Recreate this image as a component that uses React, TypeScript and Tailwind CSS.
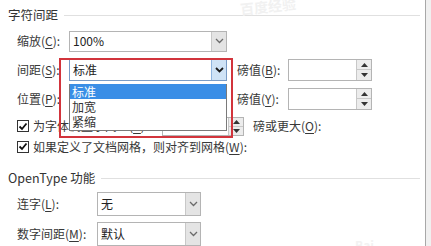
import React from 'react'

const font = { fontFamily: '"Noto Sans CJK SC", "Noto Sans", sans-serif' }

function Key({ k }: { k: string }) {
	return (
		<>
			(<span className="underline underline-offset-2">{k}</span>):
		</>
	)
}

function Chevron({ dark }: { dark?: boolean }) {
	return (
		<svg width="9" height="6" viewBox="0 0 9 6">
			<polyline points="1,1 4.5,4.5 8,1" fill="none" stroke={dark ? '#1a1a1a' : '#6b6b6b'} strokeWidth={dark ? 1.8 : 1.3} />
		</svg>
	)
}

function Combo({ value, w, h, open }: { value: string; w: string; h: string; open?: boolean }) {
	return (
		<div className={`${w} ${h} flex border ${open ? 'border-[#7a9cc6]' : 'border-[#b4b4b4]'} bg-white`}>
			<div className="flex-1 flex items-center pl-[3px] text-[12px] text-[#222]">{value}</div>
			<div
				className={`w-[15px] flex items-center justify-center border-l ${open ? 'bg-[#cfe3f6] border-[#8fb5e0]' : 'bg-[#e4e4e4] border-[#c8c8c8]'}`}
			>
				<Chevron dark={open} />
			</div>
		</div>
	)
}

function Spin({ value, w, h }: { value?: string; w: string; h: string }) {
	return (
		<div className={`${w} ${h} flex border border-[#b4b4b4] bg-white`}>
			<div className="flex-1 flex items-center pl-[4px] text-[12px] text-[#333]">{value}</div>
			<div className="w-[15px] flex flex-col border-l border-[#c8c8c8]">
				<div className="flex-1 flex items-center justify-center bg-[#ececec] border-b border-[#c8c8c8]">
					<svg width="7" height="4" viewBox="0 0 7 4">
						<polygon points="0,4 3.5,0 7,4" fill="#333" />
					</svg>
				</div>
				<div className="flex-1 flex items-center justify-center bg-[#ececec]">
					<svg width="7" height="4" viewBox="0 0 7 4">
						<polygon points="0,0 3.5,4 7,0" fill="#333" />
					</svg>
				</div>
			</div>
		</div>
	)
}

function Check() {
	return (
		<div className="w-[12px] h-[12px] border border-[#333] bg-white flex items-center justify-center">
			<svg width="10" height="9" viewBox="0 0 10 9">
				<polyline points="1.5,4.5 4,7 8.5,1.5" fill="none" stroke="#111" strokeWidth="1.8" />
			</svg>
		</div>
	)
}

function Section({ title, className }: { title: string; className: string }) {
	return (
		<div className={`flex items-center h-[22px] pl-[8px] pr-[5px] ${className}`}>
			<span className="text-[12.5px] text-[#333] whitespace-nowrap">{title}</span>
			<div className="flex-1 h-px bg-[#e0e0e0] ml-[6px]" />
		</div>
	)
}

export default function App() {
	return (
		<div className="w-[431px] h-[246px] overflow-hidden relative bg-white flex text-[#383838]" style={font}>
			<div className="w-[426px] border-r border-[#a8a8a8] flex flex-col">
				<Section title="字符间距" className="mt-[5px]" />

				<div className="flex items-center h-[21px] mt-[5px] pl-[17px] text-[12px]">
					<span className="w-[52px]">缩放<Key k="C" /></span>
					<Combo value="100%" w="w-[158px]" h="h-[21px]" />
				</div>

				<div className="flex items-center h-[22px] mt-[7px] pl-[17px] text-[12px]">
					<span className="w-[52px]">间距<Key k="S" /></span>
					<Combo value="标准" w="w-[158px]" h="h-[22px]" open />
					<span className="w-[51px] ml-[10px]">磅值<Key k="B" /></span>
					<Spin w="w-[84px]" h="h-[22px]" />
				</div>

				<div className="flex items-center h-[22px] mt-[7px] pl-[17px] text-[12px]">
					<span className="w-[52px]">位置<Key k="P" /></span>
					<Combo value="标准" w="w-[158px]" h="h-[22px]" />
					<span className="w-[51px] ml-[10px]">磅值<Key k="Y" /></span>
					<Spin w="w-[84px]" h="h-[22px]" />
				</div>

				<div className="flex items-center h-[20px] mt-[7px] pl-[17px] text-[12px]">
					<Check />
					<span className="ml-[4px] w-[129px]">为字体调整字间距<Key k="K" /></span>
					<Spin value="10" w="w-[82px]" h="h-[19px]" />
					<span className="ml-[9px]">磅或更大<Key k="O" /></span>
				</div>

				<div className="flex items-center h-[20px] mt-[1px] pl-[17px] text-[12px]">
					<Check />
					<span className="ml-[4px]">如果定义了文档网格，则对齐到网格<Key k="W" /></span>
				</div>

				<Section title="OpenType 功能" className="mt-[12px]" />

				<div className="flex items-center h-[24px] mt-[3px] pl-[17px] text-[12px]">
					<span className="w-[80px]">连字<Key k="L" /></span>
					<Combo value="无" w="w-[104px]" h="h-[24px]" />
				</div>

				<div className="flex items-center h-[24px] mt-[6px] pl-[17px] text-[12px]">
					<span className="w-[80px]">数字间距<Key k="M" /></span>
					<Combo value="默认" w="w-[104px]" h="h-[24px]" />
				</div>
			</div>
			<div className="flex-1 bg-[#f0f0f0]" />

			{/* open dropdown list */}
			<div className="absolute left-[69px] top-[84px] w-[158px] h-[47px] bg-white border border-[#7a7a7a] border-t-0 text-[12px] text-[#333]">
				<div className="h-[15px] bg-[#3a8ee6] text-white flex items-center pl-[2px]">标准</div>
				<div className="h-[15px] flex items-center pl-[2px]">加宽</div>
				<div className="h-[15px] flex items-center pl-[2px]">紧缩</div>
			</div>

			{/* red annotation box */}
			<div className="absolute left-[59px] top-[58px] w-[174px] h-[80px] border-2 border-[#d2343c]" />

			{/* faint watermark */}
			<div className="absolute left-[240px] top-[-4px] -rotate-6 text-[14px] font-bold text-[#f1f1f1]">百度经验</div>
			<div className="absolute left-[355px] top-[236px] text-[12px] font-bold text-[#f2f2f2]">Bai</div>
		</div>
	)
}
